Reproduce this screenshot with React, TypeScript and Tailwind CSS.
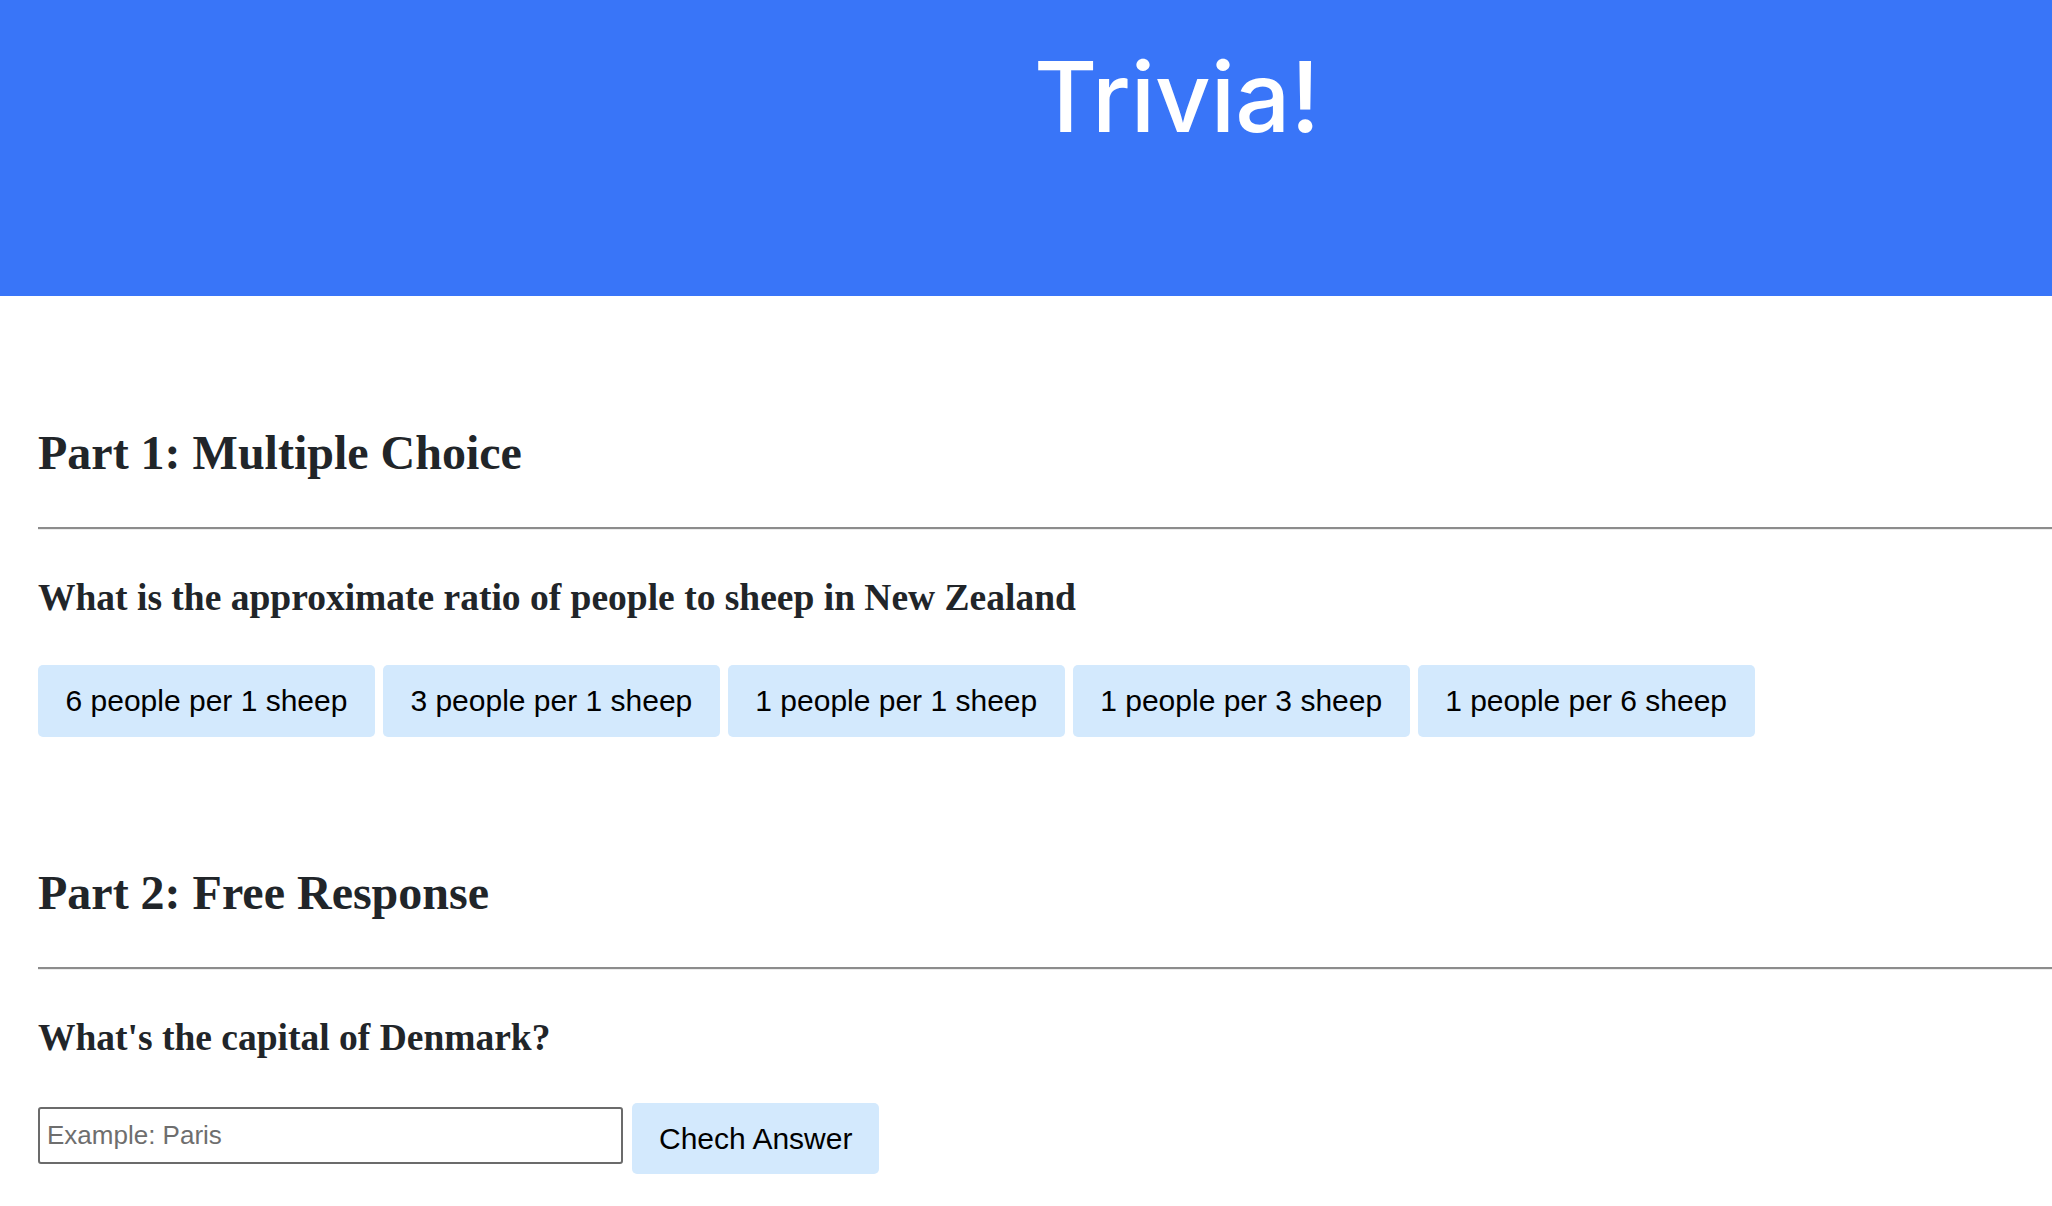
import { useState } from "react";

const choices = [
  "6 people per 1 sheep",
  "3 people per 1 sheep",
  "1 people per 1 sheep",
  "1 people per 3 sheep",
  "1 people per 6 sheep",
];

const serif = "font-['Liberation_Serif','Times_New_Roman',serif]";
const sans = "font-['Liberation_Sans',Arial,sans-serif]";

export default function App() {
  const [answer, setAnswer] = useState("");

  return (
    <div className="min-h-screen bg-white">
      {/* ── Header ───────────────────────────────────────────── */}
      <header className="h-[296px] bg-[#3975f8] pt-[48px] pl-[302px] flex justify-center">
        <h1 className="font-['Inter',sans-serif] font-medium text-[97px] leading-none text-white">
          Trivia!
        </h1>
      </header>

      <main className={`pl-[38px] text-[#212529] ${serif}`}>
        {/* ── Part 1 ─────────────────────────────────────────── */}
        <h2 className="mt-[133px] text-[48px] leading-none font-bold">Part 1: Multiple Choice</h2>
        <hr className="mt-[50px] border-0 border-t-2 border-b border-t-[#8c8c8c] border-b-[#ececec]" />
        <h3 className="mt-[49px] text-[37.5px] leading-none font-bold">
          What is the approximate ratio of people to sheep in New Zealand
        </h3>
        <div className="mt-[48px] flex gap-2">
          {choices.map((c) => (
            <button
              key={c}
              className={`h-[72px] px-[27.5px] rounded-[5px] bg-[#d3e9fd] text-black text-[30px] ${sans}`}
            >
              {c}
            </button>
          ))}
        </div>

        {/* ── Part 2 ─────────────────────────────────────────── */}
        <h2 className="mt-[132px] text-[48px] leading-none font-bold">Part 2: Free Response</h2>
        <hr className="mt-[50px] border-0 border-t-2 border-b border-t-[#8c8c8c] border-b-[#ececec]" />
        <h3 className="mt-[49px] text-[37.5px] leading-none font-bold">What's the capital of Denmark?</h3>
        <div className="mt-[47px] flex items-start gap-[9px]">
          <input
            value={answer}
            onChange={(e) => setAnswer(e.target.value)}
            placeholder="Example: Paris"
            className={`mt-[4px] w-[585px] h-[57px] border-2 border-[#6b6b6b] rounded-[3px] px-[7px] text-[26px] text-black placeholder:text-[#6e6e6e] ${sans}`}
          />
          <button className={`h-[71px] px-[27px] rounded-[5px] bg-[#d3e9fd] text-black text-[30px] ${sans}`}>
            Chech Answer
          </button>
        </div>
      </main>
    </div>
  );
}
